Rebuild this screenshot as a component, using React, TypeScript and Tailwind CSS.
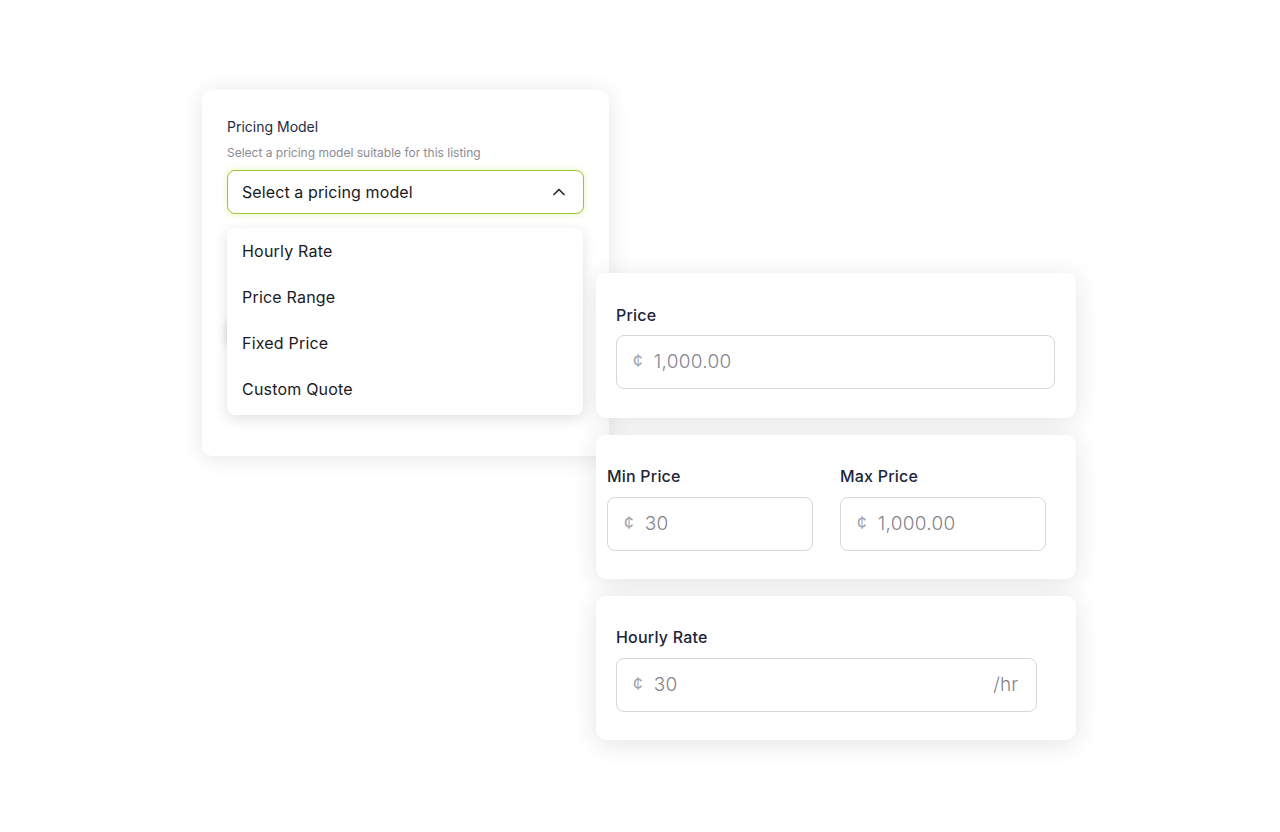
import React from "react";

const font = { fontFamily: "Inter, 'Noto Sans', sans-serif" };

function MoneyInput({ value, suffix, className }: { value: string; suffix?: string; className: string }) {
  return (
    <div className={`flex h-[54px] items-center rounded-[8px] border border-[#d6d6da] bg-white pl-[16px] pr-[18px] ${className}`}>
      <span className="text-[17px] text-[#a3a3ad]">¢</span>
      <span className="ml-[11px] text-[19px] font-light tracking-[0.3px] text-[#85858f]">{value}</span>
      {suffix && <span className="ml-auto text-[19px] font-light text-[#85858f]">{suffix}</span>}
    </div>
  );
}

export default function App() {
  return (
    <div className="min-h-[832px] w-[1280px] bg-white" style={font}>
      <div className="flex pl-[202px] pt-[90px]">
        {/* Left card */}
        <div className="relative z-0 h-[366px] w-[407px] shrink-0 rounded-[10px] bg-white px-[25px] pt-[27px] shadow-[0_2px_22px_rgba(0,0,0,0.1)]">
          <div className="text-[14px] leading-[20px] text-[#1f2a44]">Pricing Model</div>
          <div className="mt-[8px] text-[12px] leading-[16px] text-[#8b8b95]">
            Select a pricing model suitable for this listing
          </div>
          <div className="mt-[9px] flex h-[44px] items-center justify-between rounded-[8px] border border-[#9fc13b] bg-white pl-[14px] pr-[14px] shadow-[0_0_7px_rgba(200,235,90,0.45)]">
            <span className="text-[16px] tracking-[0.1px] text-[#1a1a1f]">Select a pricing model</span>
            <svg width="20" height="20" viewBox="0 0 24 24" fill="none" stroke="#27272f" strokeWidth="2" strokeLinecap="round" strokeLinejoin="round">
              <path d="M6 15l6-6 6 6" />
            </svg>
          </div>
          {/* element hidden behind dropdown */}
          <div className="absolute left-[25px] top-[230px] h-[26px] w-[200px] rounded-[6px] bg-white shadow-[0_0_8px_rgba(0,0,0,0.18)]" />
          {/* Dropdown */}
          <div className="absolute left-[25px] top-[138px] z-10 w-[356px] rounded-[8px] bg-white pb-[3px] shadow-[0_4px_14px_rgba(0,0,0,0.12)]">
            {["Hourly Rate", "Price Range", "Fixed Price", "Custom Quote"].map((t) => (
              <div key={t} className="flex h-[46px] items-center pl-[15px] text-[16px] tracking-[0.2px] text-[#1a1a1f]">
                {t}
              </div>
            ))}
          </div>
        </div>

        {/* Right column */}
        <div className="relative z-10 ml-[-13px] mt-[183px] flex w-[480px] flex-col gap-[17px]">
          <div className="h-[145px] rounded-[10px] bg-white pl-[20px] pr-[21px] pt-[30px] shadow-[0_4px_26px_rgba(0,0,0,0.11)]">
            <div className="text-[16px] font-medium leading-[24px] tracking-[0.2px] text-[#1c2539]">Price</div>
            <MoneyInput value="1,000.00" className="mt-[8px] w-full" />
          </div>
          <div className="h-[144px] rounded-[10px] bg-white pl-[11px] pt-[29px] shadow-[0_4px_26px_rgba(0,0,0,0.11)]">
            <div className="flex gap-[27px]">
              <div className="w-[206px]">
                <div className="text-[16px] font-medium leading-[24px] tracking-[0.2px] text-[#1c2539]">Min Price</div>
                <MoneyInput value="30" className="mt-[9px] w-[206px]" />
              </div>
              <div className="w-[206px]">
                <div className="text-[16px] font-medium leading-[24px] tracking-[0.2px] text-[#1c2539]">Max Price</div>
                <MoneyInput value="1,000.00" className="mt-[9px] w-[206px]" />
              </div>
            </div>
          </div>
          <div className="h-[144px] rounded-[10px] bg-white pl-[20px] pt-[29px] shadow-[0_4px_26px_rgba(0,0,0,0.11)]">
            <div className="text-[16px] font-medium leading-[24px] tracking-[0.2px] text-[#1c2539]">Hourly Rate</div>
            <MoneyInput value="30" suffix="/hr" className="mt-[9px] w-[421px]" />
          </div>
        </div>
      </div>
    </div>
  );
}
